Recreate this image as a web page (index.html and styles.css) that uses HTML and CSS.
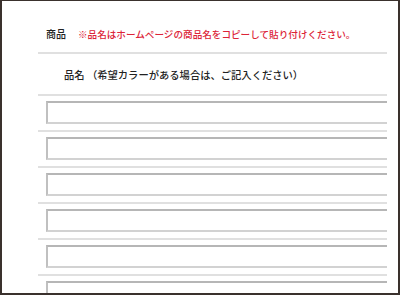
FILE: index.html
```html
<!DOCTYPE html>
<html lang="ja">
<head>
  <meta charset="UTF-8" />
  <meta name="viewport" content="width=device-width, initial-scale=1.0"/>
  <title>商品名の入力</title>
  <link rel="stylesheet" href="styles.css">
</head>
<body>
  <div class="frame">
    <div class="form">
      <div class="head">
        <span class="head-label">商品</span>
        <span class="note">※品名はホームページの商品名をコピーして貼り付けください。</span>
      </div>

      <div class="sub">品名 （希望カラーがある場合は、ご記入ください）</div>

      <div class="row"><input type="text" class="field" /></div>
      <div class="row"><input type="text" class="field" /></div>
      <div class="row"><input type="text" class="field" /></div>
      <div class="row"><input type="text" class="field" /></div>
      <div class="row"><input type="text" class="field" /></div>
      <div class="row"><input type="text" class="field" /></div>
    </div>
  </div>
</body>
</html>
```

FILE: styles.css
```css
html, body {
  margin: 0;
  padding: 0;
  background: #fff;
}
body {
  font-family: "Noto Sans CJK JP", "Noto Sans", sans-serif;
  font-weight: 500;
  color: #222;
}
.frame {
  box-sizing: border-box;
  width: 400px;
  height: 295px;
  border: 2px solid #3a312d;
  border-top-width: 1px;
  padding: 0 11px 0 36px;
  overflow: hidden;
}
.form {
  overflow: hidden;
  height: 100%;
}
.head {
  display: flex;
  align-items: center;
  gap: 12px;
  padding: 25px 0 10px 8px;
  line-height: 16px;
  font-size: 10px;
  border-bottom: 2px solid #e0e0e0;
}
.note {
  color: #dc2438;
  font-size: 9.6px;
}
.sub {
  padding: 13px 0 11px 26px;
  line-height: 16px;
  font-size: 10.3px;
  border-bottom: 2px solid #e0e0e0;
}
.row {
  padding: 5px 0 6px 8px;
  border-bottom: 2px solid #e0e0e0;
}
.field {
  display: block;
  box-sizing: border-box;
  width: calc(100% + 20px);
  height: 23px;
  margin: 0;
  padding: 0 4px;
  border: 2px solid #c0c0c0;
  border-top-color: #b6b6b6;
  border-bottom-color: #d2d2d2;
  background: #fff;
}
```
